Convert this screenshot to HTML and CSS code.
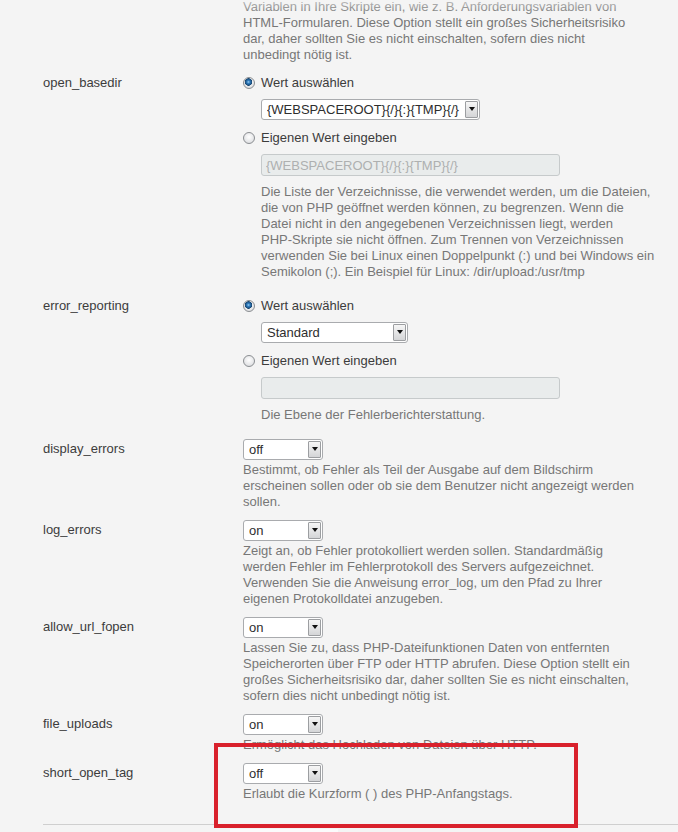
FILE: index.html
```html
<!DOCTYPE html>
<html lang="de">
<head>
    <meta charset="UTF-8">
    <meta name="viewport" content="width=device-width, initial-scale=1.0">
    <title>PHP-Einstellungen</title>
    <link rel="stylesheet" href="styles.css">
</head>
<body>

    <div class="settings">

        <!-- Rest der vorherigen Einstellung (oben abgeschnitten) -->
        <div class="row partial">
            <div class="label"></div>
            <div class="field">
                <p class="desc">Variablen in Ihre Skripte ein, wie z. B. Anforderungsvariablen von HTML-Formularen. Diese Option stellt ein großes Sicherheitsrisiko dar, daher sollten Sie es nicht einschalten, sofern dies nicht unbedingt nötig ist.</p>
            </div>
        </div>

        <div class="row radio-row">
            <div class="label">open_basedir</div>
            <div class="field">
                <label class="option"><input type="radio" name="open_basedir" checked> Wert auswählen</label>
                <div class="sub">
                    <span class="select wide">
                        <select>
                            <option>{WEBSPACEROOT}{/}{:}{TMP}{/}</option>
                        </select>
                    </span>
                </div>
                <label class="option gap"><input type="radio" name="open_basedir"> Eigenen Wert eingeben</label>
                <div class="sub">
                    <input type="text" class="text" placeholder="{WEBSPACEROOT}{/}{:}{TMP}{/}" disabled>
                    <p class="desc">Die Liste der Verzeichnisse, die verwendet werden, um die Dateien, die von PHP geöffnet werden können, zu begrenzen. Wenn die Datei nicht in den angegebenen Verzeichnissen liegt, werden <span class="nobr">PHP-Skripte</span> sie nicht öffnen. Zum Trennen von Verzeichnissen verwenden Sie bei Linux einen Doppelpunkt (:) und bei Windows ein Semikolon (;). Ein Beispiel für Linux: /dir/upload:/usr/tmp</p>
                </div>
            </div>
        </div>

        <div class="row radio-row">
            <div class="label">error_reporting</div>
            <div class="field">
                <label class="option"><input type="radio" name="error_reporting" checked> Wert auswählen</label>
                <div class="sub">
                    <span class="select medium">
                        <select>
                            <option>Standard</option>
                        </select>
                    </span>
                </div>
                <label class="option gap"><input type="radio" name="error_reporting"> Eigenen Wert eingeben</label>
                <div class="sub">
                    <input type="text" class="text" disabled>
                    <p class="desc">Die Ebene der Fehlerberichterstattung.</p>
                </div>
            </div>
        </div>

        <div class="row">
            <div class="label">display_errors</div>
            <div class="field">
                <span class="select small"><select><option>off</option><option>on</option></select></span>
                <p class="desc">Bestimmt, ob Fehler als Teil der Ausgabe auf dem Bildschirm erscheinen sollen oder ob sie dem Benutzer nicht angezeigt werden sollen.</p>
            </div>
        </div>

        <div class="row">
            <div class="label">log_errors</div>
            <div class="field">
                <span class="select small"><select><option>on</option><option>off</option></select></span>
                <p class="desc">Zeigt an, ob Fehler protokolliert werden sollen. Standardmäßig werden Fehler im Fehlerprotokoll des Servers aufgezeichnet. Verwenden Sie die Anweisung error_log, um den Pfad zu Ihrer eigenen Protokolldatei anzugeben.</p>
            </div>
        </div>

        <div class="row">
            <div class="label">allow_url_fopen</div>
            <div class="field">
                <span class="select small"><select><option>on</option><option>off</option></select></span>
                <p class="desc">Lassen Sie zu, dass PHP-Dateifunktionen Daten von entfernten Speicherorten über FTP oder HTTP abrufen. Diese Option stellt ein großes Sicherheitsrisiko dar, daher sollten Sie es nicht einschalten, sofern dies nicht unbedingt nötig ist.</p>
            </div>
        </div>

        <div class="row">
            <div class="label">file_uploads</div>
            <div class="field">
                <span class="select small"><select><option>on</option><option>off</option></select></span>
                <p class="desc">Ermöglicht das Hochladen von Dateien über HTTP.</p>
            </div>
        </div>

        <div class="row">
            <div class="label">short_open_tag</div>
            <div class="field">
                <span class="select small"><select><option>off</option><option>on</option></select></span>
                <p class="desc">Erlaubt die Kurzform ( ) des PHP-Anfangstags.</p>
            </div>
        </div>

    </div>

    <div class="footer">
        <div class="footer-tab"></div>
    </div>

    <!-- Markierung -->
    <div class="highlight"></div>

</body>
</html>
```

FILE: styles.css
```css
:root {
    --bg: #f4f4f4;
    --text: #3c3c3c;
    --muted: #777777;
    --border: #a9abae;
    --red: #d9212c;
}
body {
    margin: 0;
    font-family: "Liberation Sans", Arial, sans-serif;
    font-size: 13px;
    line-height: 16px;
    color: var(--text);
    background-color: var(--bg);
    position: relative;
    height: 832px;
    overflow: hidden;
}
/* oben leicht ausgeblendet, wie beim Scrollen */
body::before {
    content: "";
    position: absolute;
    top: 0;
    left: 0;
    right: 0;
    height: 14px;
    background: linear-gradient(rgba(244, 244, 244, 0.6), rgba(244, 244, 244, 0));
    z-index: 1;
}
.settings {
    margin-top: -1px;
    padding-left: 43px;
}
.row {
    display: grid;
    grid-template-columns: 200px 1fr;
    padding: 5px 0;
}
.row.partial {
    padding-top: 0;
}
.row.radio-row {
    padding: 7px 0 11px;
}
.label {
    padding-top: 2px;
}
.radio-row .label {
    padding-top: 0;
}
.desc {
    margin: 2px 0 0;
    max-width: 402px;
    color: var(--muted);
}
.partial .desc {
    margin-top: 0;
}
.nobr {
    white-space: nowrap;
}
.sub {
    padding-left: 18px;
    margin-top: 8px;
}
.sub .desc {
    margin-top: 8px;
    max-width: 395px;
}
.option {
    display: flex;
    align-items: center;
    gap: 6px;
    height: 16px;
}
.option.gap {
    margin-top: 10px;
}

/* Radio im Windows-Stil */
.option input {
    appearance: none;
    -webkit-appearance: none;
    margin: 0;
    width: 12px;
    height: 12px;
    border-radius: 50%;
    border: 1px solid #8b8e92;
    background: radial-gradient(circle at 50% 40%, #ffffff 0, #e6e7e9 60%, #cfd1d4 100%);
    box-sizing: border-box;
}
.option input:checked {
    background:
        radial-gradient(circle at 45% 40%, #9fd0f0 0, #2f7cbf 1.5px, #17456f 3.5px, transparent 4px),
        radial-gradient(circle at 50% 40%, #ffffff 0, #e6e7e9 60%, #cfd1d4 100%);
}

/* Auswahlfelder */
.select {
    display: inline-block;
    position: relative;
    height: 21px;
    box-sizing: border-box;
    border: 1px solid var(--border);
    border-radius: 3px;
    background: #fff;
    vertical-align: top;
}
.select select {
    appearance: none;
    -webkit-appearance: none;
    border: none;
    outline: none;
    background: transparent;
    font-family: inherit;
    font-size: 13px;
    color: #2e2e2e;
    height: 19px;
    width: 100%;
    padding: 0 18px 0 5px;
    margin: 0;
}
.select::before {
    content: "";
    position: absolute;
    top: 1px;
    right: 1px;
    bottom: 1px;
    width: 13px;
    border: 1px solid #9c9ea1;
    border-radius: 1px;
    background: linear-gradient(#f6f6f6, #d4d5d7);
    box-sizing: border-box;
    pointer-events: none;
}
.select::after {
    content: "";
    position: absolute;
    top: 7px;
    right: 4px;
    border-left: 3.5px solid transparent;
    border-right: 3.5px solid transparent;
    border-top: 4px solid #111;
    pointer-events: none;
}
.select.wide {
    width: 219px;
}
.select.medium {
    width: 147px;
}
.select.small {
    width: 80px;
}

/* Texteingabe */
.text {
    display: block;
    width: 299px;
    height: 22px;
    box-sizing: border-box;
    border: 1px solid #c6cacb;
    border-radius: 3px;
    background: #e9ecec;
    padding: 0 4px;
    font-family: inherit;
    font-size: 13px;
}
.text::placeholder {
    color: #aeb0b0;
}

.footer {
    margin: 17px 0 0 43px;
    border-top: 1px solid #cfcfcf;
    padding-top: 4px;
}
.footer-tab {
    margin-left: 187px;
    width: 108px;
    height: 10px;
    background: #fbfbfb;
}

.highlight {
    position: absolute;
    left: 214px;
    top: 743px;
    width: 364px;
    height: 85px;
    box-sizing: border-box;
    border: 4px solid var(--red);
    z-index: 2;
}
```
